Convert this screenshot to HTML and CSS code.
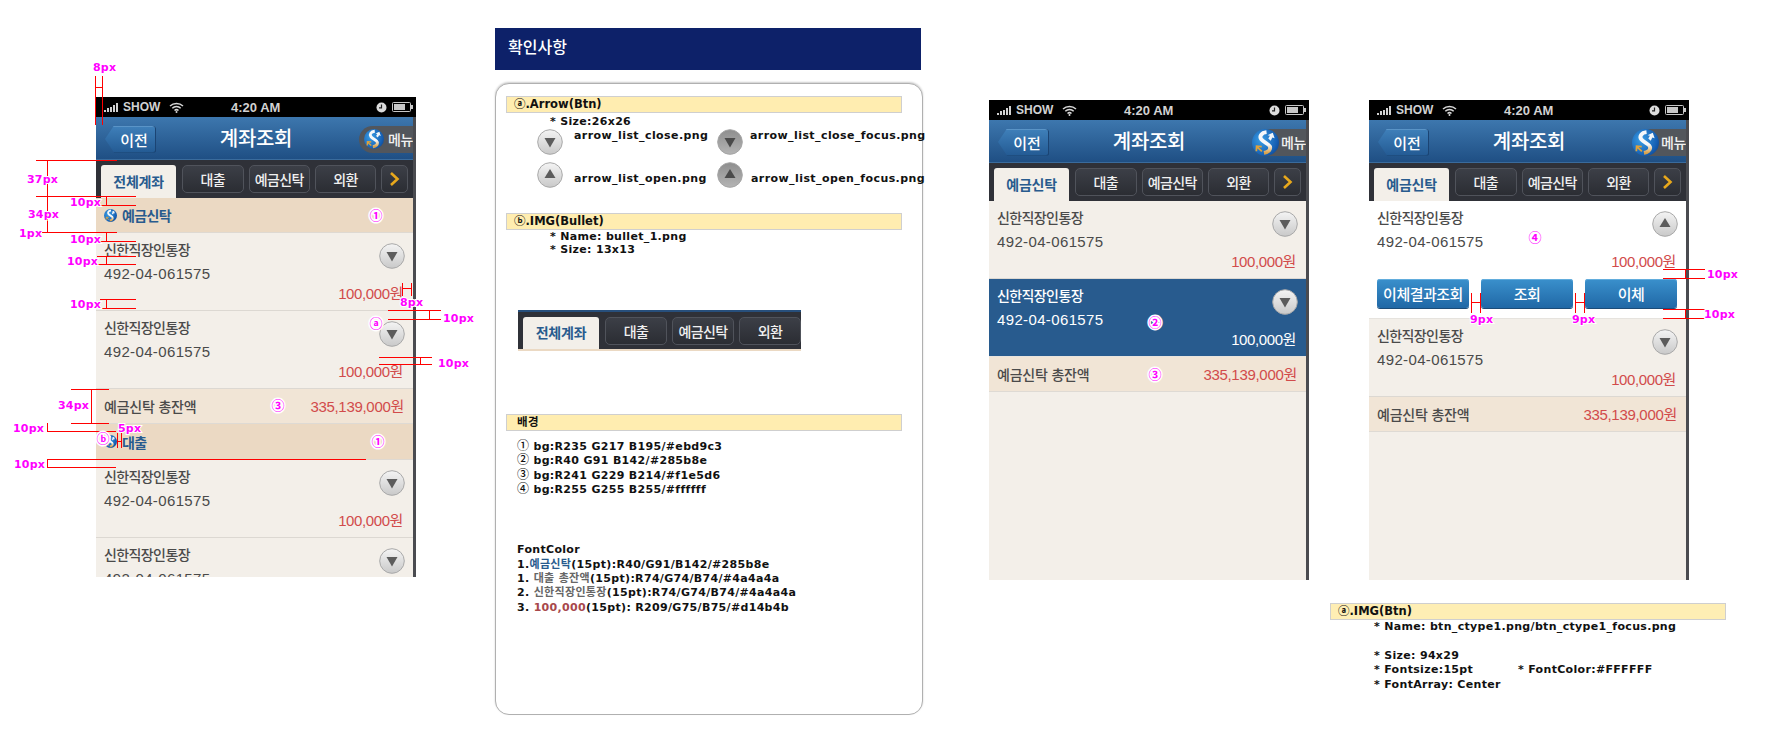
FILE: index.html
```html
<!DOCTYPE html>
<html lang="ko">
<head>
<meta charset="utf-8">
<title>계좌조회 화면 설계</title>
<link rel="stylesheet" href="styles.css">
</head>
<body>
<svg class="sprite" aria-hidden="true">
  <defs>
    <linearGradient id="g-light" x1="0" y1="0" x2="0" y2="1"><stop offset="0" stop-color="#f4f4f4"/><stop offset="1" stop-color="#c9c9c9"/></linearGradient>
    <linearGradient id="g-dark" x1="0" y1="0" x2="0" y2="1"><stop offset="0" stop-color="#8e8e8e"/><stop offset="1" stop-color="#b4b4b4"/></linearGradient>
    <radialGradient id="g-logo" cx=".35" cy=".4" r=".8"><stop offset="0" stop-color="#3a9fe6"/><stop offset=".7" stop-color="#1660b4"/><stop offset="1" stop-color="#0e3f86"/></radialGradient>
    <linearGradient id="g-s" x1="0" y1="0" x2="0" y2="1"><stop offset="0" stop-color="#f6f8fa"/><stop offset=".6" stop-color="#f6f8fa"/><stop offset="1" stop-color="#d9a24a"/></linearGradient>
    <symbol id="arrow-down" viewBox="0 0 26 26"><circle cx="13" cy="13" r="12.3" fill="url(#g-light)" stroke="#a9a9a9"/><path d="M7.5 9h11L13 18.5z" fill="#5c5c5c"/></symbol>
    <symbol id="arrow-up" viewBox="0 0 26 26"><circle cx="13" cy="13" r="12.3" fill="url(#g-light)" stroke="#a9a9a9"/><path d="M7.5 16h11L13 7z" fill="#5c5c5c"/></symbol>
    <symbol id="arrow-down-focus" viewBox="0 0 26 26"><circle cx="13" cy="13" r="12.3" fill="url(#g-dark)" stroke="#a5a5a5"/><path d="M7.5 9h11L13 18.5z" fill="#4a4a4a"/></symbol>
    <symbol id="arrow-up-focus" viewBox="0 0 26 26"><circle cx="13" cy="13" r="12.3" fill="url(#g-dark)" stroke="#a5a5a5"/><path d="M7.5 16h11L13 7z" fill="#4a4a4a"/></symbol>
    <symbol id="logo" viewBox="0 0 26 26"><circle cx="13" cy="13" r="13" fill="url(#g-logo)"/><path d="M14 3C9 3.500 6.800 7 9 10c2.500 3.300 8.500 4.500 8.500 8 0 2.500-2.500 4.500-6 5" fill="none" stroke="url(#g-s)" stroke-width="3.800"/><path d="M15 6l5-2.500 1.800 5.500-2.200-.8-1.600 3-2.300-2 1.500-2.600z" fill="#f2f6fa"/><path d="M4 16.500l5.500 5M4.200 21.500l.2-5 5 .4" fill="none" stroke="#e0a33a" stroke-width="1.700"/></symbol>
  </defs>
</svg>

<main class="sheet">
  <!-- 화면 1 -->
  <section class="phone phone-first">
    <div class="status">
      <span class="signal"><i></i><i></i><i></i><i></i><i></i></span><span class="carrier">SHOW</span>
      <svg class="wifi" viewBox="0 0 15 11"><path d="M1 4a9.500 9.500 0 0 1 13 0M3.300 6.300a6 6 0 0 1 8.400 0M5.500 8.500a3 3 0 0 1 4 0" fill="none" stroke="#d8d8d8" stroke-width="1.500"/><circle cx="7.500" cy="10" r="1" fill="#d8d8d8"/></svg>
      <span class="time">4:20 AM</span>
      <svg class="clock" viewBox="0 0 11 11"><circle cx="5.500" cy="5.500" r="5" fill="#dcdcdc"/><path d="M5.500 2.500v3.300H3" fill="none" stroke="#222" stroke-width="1.200"/></svg>
      <svg class="battery" viewBox="0 0 21 10"><rect x=".5" y=".5" width="18" height="9" rx="1" fill="none" stroke="#c8c8c8"/><rect x="2" y="2" width="11" height="6" fill="#c8c8c8"/><rect x="19" y="3" width="2" height="4" fill="#c8c8c8"/></svg>
    </div>
    <div class="screen">
      <header class="nav">
        <div class="back">이전</div>
        <h1 class="title">계좌조회</h1>
        <div class="menu"><svg class="menu-logo"><use href="#logo"/></svg><span>메뉴</span></div>
      </header>
      <nav class="tabs">
        <div class="tab tab-on">전체계좌</div><div class="tab">대출</div><div class="tab">예금신탁</div><div class="tab">외환</div><div class="tab tab-more"><svg viewBox="0 0 11 14"><path d="M2 1l6.500 6L2 13" fill="none" stroke="#e8a81c" stroke-width="2.600"/></svg></div>
      </nav>
      <div class="group"><svg class="bullet"><use href="#logo"/></svg>예금신탁</div>
      <article class="item">
        <div class="item-top"><div><div class="name">신한직장인통장</div><div class="acct">492-04-061575</div></div><svg class="arrow"><use href="#arrow-down"/></svg></div>
        <div class="amount">100,000원</div>
      </article>
      <article class="item">
        <div class="item-top"><div><div class="name">신한직장인통장</div><div class="acct">492-04-061575</div></div><svg class="arrow"><use href="#arrow-down"/></svg></div>
        <div class="amount">100,000원</div>
      </article>
      <div class="total"><span>예금신탁 총잔액</span><b>335,139,000원</b></div>
      <div class="group group-tall"><svg class="bullet"><use href="#logo"/></svg>대출</div>
      <article class="item">
        <div class="item-top"><div><div class="name">신한직장인통장</div><div class="acct">492-04-061575</div></div><svg class="arrow"><use href="#arrow-down"/></svg></div>
        <div class="amount">100,000원</div>
      </article>
      <article class="item">
        <div class="item-top"><div><div class="name">신한직장인통장</div><div class="acct">492-04-061575</div></div><svg class="arrow"><use href="#arrow-down"/></svg></div>
        <div class="amount">100,000원</div>
      </article>
    </div>
  </section>

  <!-- 확인사항 -->
  <section class="notes">
    <h2 class="notes-head">확인사항</h2>
    <div class="panel">
      <div class="bar">ⓐ.Arrow(Btn)</div>
      <p class="line indent line-first">* Size:26x26</p>
      <div class="arrow-grid">
        <svg class="arrow"><use href="#arrow-down"/></svg><span class="file file-high">arrow_list_close.png</span>
        <svg class="arrow"><use href="#arrow-down-focus"/></svg><span class="file file-high">arrow_list_close_focus.png</span>
        <svg class="arrow"><use href="#arrow-up"/></svg><span class="file">arrow_list_open.png</span>
        <svg class="arrow"><use href="#arrow-up-focus"/></svg><span class="file file-last">arrow_list_open_focus.png</span>
      </div>
      <div class="bar bar-b">ⓑ.IMG(Bullet)</div>
      <p class="line indent">* Name: bullet_1.png</p>
      <p class="line indent">* Size: 13x13</p>
      <div class="tabs tabs-sample">
        <div class="tab tab-on">전체계좌</div><div class="tab">대출</div><div class="tab">예금신탁</div><div class="tab">외환</div>
      </div>
      <div class="bar bar-c"><span class="bar-ko">배경</span></div>
      <div class="list">
        <p class="line"><span class="num">①</span> bg:R235 G217 B195/#ebd9c3</p>
        <p class="line"><span class="num">②</span> bg:R40 G91 B142/#285b8e</p>
        <p class="line"><span class="num">③</span> bg:R241 G229 B214/#f1e5d6</p>
        <p class="line"><span class="num">④</span> bg:R255 G255 B255/#ffffff</p>
      </div>
      <div class="list list-font">
        <p class="line">FontColor</p>
        <p class="line">1.<span class="c-blue">예금신탁</span>(15pt):R40/G91/B142/#285b8e</p>
        <p class="line">1. <span class="c-gray">대출 총잔액</span>(15pt):R74/G74/B74/#4a4a4a</p>
        <p class="line">2. <span class="c-gray">신한직장인통장</span>(15pt):R74/G74/B74/#4a4a4a</p>
        <p class="line">3. <span class="c-red">100,000</span>(15pt): R209/G75/B75/#d14b4b</p>
      </div>
    </div>
  </section>

  <!-- 화면 2 -->
  <section class="phone phone-second">
    <div class="status">
      <span class="signal"><i></i><i></i><i></i><i></i><i></i></span><span class="carrier">SHOW</span>
      <svg class="wifi" viewBox="0 0 15 11"><path d="M1 4a9.500 9.500 0 0 1 13 0M3.300 6.300a6 6 0 0 1 8.400 0M5.500 8.500a3 3 0 0 1 4 0" fill="none" stroke="#d8d8d8" stroke-width="1.500"/><circle cx="7.500" cy="10" r="1" fill="#d8d8d8"/></svg>
      <span class="time">4:20 AM</span>
      <svg class="clock" viewBox="0 0 11 11"><circle cx="5.500" cy="5.500" r="5" fill="#dcdcdc"/><path d="M5.500 2.500v3.300H3" fill="none" stroke="#222" stroke-width="1.200"/></svg>
      <svg class="battery" viewBox="0 0 21 10"><rect x=".5" y=".5" width="18" height="9" rx="1" fill="none" stroke="#c8c8c8"/><rect x="2" y="2" width="11" height="6" fill="#c8c8c8"/><rect x="19" y="3" width="2" height="4" fill="#c8c8c8"/></svg>
    </div>
    <div class="screen">
      <header class="nav">
        <div class="back">이전</div>
        <h1 class="title">계좌조회</h1>
        <div class="menu menu-big"><svg class="menu-logo"><use href="#logo"/></svg><span>메뉴</span></div>
      </header>
      <nav class="tabs">
        <div class="tab tab-on">예금신탁</div><div class="tab">대출</div><div class="tab">예금신탁</div><div class="tab">외환</div><div class="tab tab-more"><svg viewBox="0 0 11 14"><path d="M2 1l6.500 6L2 13" fill="none" stroke="#e8a81c" stroke-width="2.600"/></svg></div>
      </nav>
      <article class="item">
        <div class="item-top"><div><div class="name">신한직장인통장</div><div class="acct">492-04-061575</div></div><svg class="arrow"><use href="#arrow-down"/></svg></div>
        <div class="amount">100,000원</div>
      </article>
      <article class="item item-focus">
        <div class="item-top"><div><div class="name">신한직장인통장</div><div class="acct">492-04-061575</div></div><svg class="arrow"><use href="#arrow-down"/></svg></div>
        <div class="amount">100,000원</div>
      </article>
      <div class="total"><span>예금신탁 총잔액</span><b>335,139,000원</b></div>
    </div>
  </section>

  <!-- 화면 3 -->
  <section class="third">
    <div class="phone phone-third">
      <div class="status">
        <span class="signal"><i></i><i></i><i></i><i></i><i></i></span><span class="carrier">SHOW</span>
        <svg class="wifi" viewBox="0 0 15 11"><path d="M1 4a9.500 9.500 0 0 1 13 0M3.300 6.300a6 6 0 0 1 8.400 0M5.500 8.500a3 3 0 0 1 4 0" fill="none" stroke="#d8d8d8" stroke-width="1.500"/><circle cx="7.500" cy="10" r="1" fill="#d8d8d8"/></svg>
        <span class="time">4:20 AM</span>
        <svg class="clock" viewBox="0 0 11 11"><circle cx="5.500" cy="5.500" r="5" fill="#dcdcdc"/><path d="M5.500 2.500v3.300H3" fill="none" stroke="#222" stroke-width="1.200"/></svg>
        <svg class="battery" viewBox="0 0 21 10"><rect x=".5" y=".5" width="18" height="9" rx="1" fill="none" stroke="#c8c8c8"/><rect x="2" y="2" width="11" height="6" fill="#c8c8c8"/><rect x="19" y="3" width="2" height="4" fill="#c8c8c8"/></svg>
      </div>
      <div class="screen">
        <header class="nav">
          <div class="back">이전</div>
          <h1 class="title">계좌조회</h1>
          <div class="menu menu-big"><svg class="menu-logo"><use href="#logo"/></svg><span>메뉴</span></div>
        </header>
        <nav class="tabs">
          <div class="tab tab-on">예금신탁</div><div class="tab">대출</div><div class="tab">예금신탁</div><div class="tab">외환</div><div class="tab tab-more"><svg viewBox="0 0 11 14"><path d="M2 1l6.500 6L2 13" fill="none" stroke="#e8a81c" stroke-width="2.600"/></svg></div>
        </nav>
        <article class="item item-open">
          <div class="item-top"><div><div class="name">신한직장인통장</div><div class="acct">492-04-061575</div></div><svg class="arrow"><use href="#arrow-up"/></svg></div>
          <div class="amount">100,000원</div>
          <div class="actions"><div class="btn">이체결과조회</div><div class="btn">조회</div><div class="btn">이체</div></div>
        </article>
        <article class="item">
          <div class="item-top"><div><div class="name">신한직장인통장</div><div class="acct">492-04-061575</div></div><svg class="arrow"><use href="#arrow-down"/></svg></div>
          <div class="amount">100,000원</div>
        </article>
        <div class="total"><span>예금신탁 총잔액</span><b>335,139,000원</b></div>
      </div>
    </div>
    <div class="btn-notes">
      <div class="bar bar-wide">ⓐ.IMG(Btn)</div>
      <p class="line indent-b">* Name: btn_ctype1.png/btn_ctype1_focus.png</p>
      <p class="line indent-b gap-line">* Size: 94x29</p>
      <p class="line indent-b split"><span class="split-col">* Fontsize:15pt</span><span>* FontColor:#FFFFFF</span></p>
      <p class="line indent-b">* FontArray: Center</p>
    </div>
  </section>
</main>

<!-- 치수 주석 -->
<svg class="marks" viewBox="0 0 1780 740">
  <path class="rule" d="M95.500 76V125M102.500 76V125M96 87H102
    M36 160.500H117M47.500 160V232M36 196.500H136M42 232.500H117
    M100 205.500H136M106.500 196V205M100 241.500H136M106.500 233V241M97 256.500H136M97 264.500H136M106.500 256V264
    M100 299.500H136M100 308.500H136M106.500 299V308
    M402.500 283V296M411.500 283V296M402 288.500H411
    M388 310.500H441M388 319.500H441M429.500 310V319
    M379 357.500H432M379 364.500H432M420.500 357V364
    M71 389.500H109M71 423.500H109M91.500 389V423
    M47 431.500H116M47.500 423V431M117.500 433V448M121.500 433V448M117 441.500H121
    M47 459.500H366M47 467.500H116M47.500 459V467
    M1663 269.500H1705M1663 278.500H1705M1685.500 269V278
    M1663 309.500H1705M1663 318.500H1705M1685.500 309V318
    M1471.500 293V313M1480.500 293V313M1471 302.500H1480
    M1575.500 293V313M1584.500 293V313M1575 302.500H1584"/>
  <g class="dim">
    <text x="93" y="71">8px</text>
    <text x="27" y="183">37px</text>
    <text x="28" y="218">34px</text>
    <text x="19" y="237">1px</text>
    <text x="70" y="206">10px</text>
    <text x="70" y="243">10px</text>
    <text x="67" y="265">10px</text>
    <text x="70" y="308">10px</text>
    <text x="400" y="306">8px</text>
    <text x="443" y="322">10px</text>
    <text x="438" y="367">10px</text>
    <text x="58" y="409">34px</text>
    <text x="13" y="432">10px</text>
    <text x="118" y="432">5px</text>
    <text x="14" y="468">10px</text>
    <text x="1707" y="278">10px</text>
    <text x="1704" y="318">10px</text>
    <text x="1470" y="323">9px</text>
    <text x="1572" y="323">9px</text>
  </g>
  <g class="dot">
    <text x="376" y="220">①</text>
    <text x="376" y="328">ⓐ</text>
    <text x="278" y="410">③</text>
    <text x="103" y="443">ⓑ</text>
    <text x="378" y="446">①</text>
    <text x="1155" y="327">②</text>
    <text x="1155" y="379">③</text>
    <text x="1535" y="242">④</text>
  </g>
</svg>
</body>
</html>
```
FILE: styles.css
```css
* { box-sizing: border-box; }
html, body { margin: 0; padding: 0; background: #fff; }
body {
  position: relative;
  width: 1780px;
  height: 740px;
  overflow: hidden;
  font-family: "Liberation Sans", "Noto Sans CJK KR", sans-serif;
}
p, h1, h2 { margin: 0; }

.sprite { position: absolute; width: 0; height: 0; }

.sheet {
  display: flex;
  align-items: flex-start;
  padding: 28px 0 0 96px;
}

/* phones */
.phone {
  width: 320px;
  height: 480px;
  overflow: hidden;
  flex: none;
  background: #4a4b50;
}
.phone-first { margin-top: 69px; }
.phone-second { margin: 72px 0 0 66px; }
.phone-third { margin-left: 39px; }
.third { margin: 72px 0 0 21px; width: 400px; flex: none; }

.status {
  height: 20px;
  background: #000;
  display: flex;
  align-items: center;
  padding-left: 8px;
  color: #d2d2d2;
  font-size: 13px;
  font-weight: 700;
  position: relative;
}
.signal { display: flex; align-items: flex-end; gap: 1px; height: 9px; width: 15px; margin-top: 1px; }
.signal i { display: block; width: 2px; background: #d2d2d2; }
.signal i:nth-child(1) { height: 2px; }
.signal i:nth-child(2) { height: 4px; }
.signal i:nth-child(3) { height: 5px; }
.signal i:nth-child(4) { height: 7px; }
.signal i:nth-child(5) { height: 9px; }
.carrier { margin-left: 4px; width: 36px; font-size: 12px; }
.wifi { width: 15px; height: 11px; margin-left: 10px; }
.time { margin-left: 47px; width: 52px; white-space: nowrap; }
.clock { width: 11px; height: 11px; margin-left: 93px; }
.battery { width: 21px; height: 10px; margin-left: 5px; }

.screen { width: 317px; height: 460px; background: #f3efe9; overflow: hidden; }

.nav {
  height: 43px;
  display: grid;
  grid-template-columns: 1fr auto 1fr;
  align-items: center;
  padding-left: 3px;
  background: linear-gradient(#3d77ae, #1f4f84);
  border-bottom: 1px solid #3a6b9c;
}
.back {
  justify-self: start;
  width: 51px;
  height: 27px;
  margin-left: 6px;
  padding-left: 7px;
  display: flex;
  align-items: center;
  justify-content: center;
  color: #fff;
  font-size: 15px;
  font-weight: 500;
  background: linear-gradient(#3f80ba, #235a93);
  box-shadow: inset 0 -1px 0 #1b4473, inset -1px 0 0 #1b4473, inset 0 1px 0 #5a94c7;
  clip-path: polygon(0 50%, 9px 0, 100% 0, 100% 100%, 9px 100%);
  border-radius: 0 3px 3px 0;
}
.title {
  color: #fff;
  font-size: 20px;
  font-weight: 500;
  line-height: 43px;
  padding-top: 1px;
  letter-spacing: -.3px;
  white-space: nowrap;
}
.menu {
  justify-self: end;
  width: 54px;
  height: 27px;
  display: flex;
  align-items: center;
  background: #52565c;
  border-radius: 14px 0 0 14px;
  color: #f2f2f2;
  font-size: 14px;
  font-weight: 500;
  letter-spacing: -.4px;
  white-space: nowrap;
  overflow: hidden;
  padding-left: 5px;
}
.menu-logo { width: 20px; height: 20px; flex: none; margin-right: 4px; }
.menu-big { overflow: visible; padding-left: 0; background: linear-gradient(90deg, transparent 12px, #52565c 12px); }
.menu-big .menu-logo { width: 27px; height: 27px; margin-right: 2px; }

.tabs {
  height: 38px;
  padding: 5px 5px 0;
  display: flex;
  gap: 5px;
  background: #2f3138;
}
.tab {
  width: 62px;
  height: 28px;
  border: 1px solid #50535b;
  border-radius: 5px;
  background: linear-gradient(#3c3f47, #2b2d33);
  color: #f0f0f0;
  font-size: 14px;
  font-weight: 500;
  letter-spacing: -.6px;
  display: flex;
  align-items: center;
  justify-content: center;
  white-space: nowrap;
}
.tab-on {
  width: 76px;
  height: 33px;
  margin-right: 1px;
  border: 0;
  border-radius: 3px 3px 0 0;
  background: #f3efe9;
  color: #285b8e;
  font-weight: 700;
  letter-spacing: -.2px;
  padding-bottom: 2px;
}
.tab-more { width: 27px; }
.tab-more svg { width: 11px; height: 14px; }

.group {
  height: 35px;
  display: flex;
  align-items: center;
  padding-left: 8px;
  background: #ebd9c3;
  border-bottom: 1px solid #ded9d2;
  color: #285b8e;
  font-size: 14px;
  font-weight: 700;
  letter-spacing: -.6px;
}
.group-tall { height: 36px; }
.bullet { width: 13px; height: 13px; margin-right: 5px; flex: none; }

.item {
  height: 78px;
  padding: 5px 8px 0;
  border-bottom: 1px solid #dcd8d2;
  color: #4a4a4a;
}
.item-top { display: flex; justify-content: space-between; }
.name { font-size: 14px; line-height: 24px; letter-spacing: -.6px; font-weight: 500; }
.acct { font-size: 15px; line-height: 24px; letter-spacing: .36px; }
.arrow { width: 26px; height: 26px; flex: none; }
.item-top .arrow { margin-top: 5px; }
.amount {
  padding-right: 2px;
  text-align: right;
  font-size: 15px;
  line-height: 16px;
  letter-spacing: -.4px;
  color: #d14b4b;
}
.item-focus { background: #285b8e; color: #fff; border-bottom-color: #e8e4de; }
.item-focus .amount { color: #fff; }
.item-open { height: 118px; background: #fff; border-bottom-color: #e6e3de; }
.actions { display: flex; gap: 12px; margin-top: 9px; }
.btn {
  width: 92px;
  height: 29px;
  border-radius: 3px;
  background: linear-gradient(#3a90cc, #2068a6);
  box-shadow: inset 0 1px 0 #62addd, 0 1px 0 #1c4c78;
  color: #fff;
  font-size: 15px;
  font-weight: 500;
  letter-spacing: -.5px;
  display: flex;
  align-items: center;
  justify-content: center;
  white-space: nowrap;
}

.total {
  height: 35px;
  display: flex;
  align-items: center;
  justify-content: space-between;
  padding: 0 9px 1px 8px;
  background: #f1e5d6;
  border-bottom: 1px solid #dedad4;
  color: #4a4a4a;
  font-size: 14px;
  font-weight: 500;
  letter-spacing: -.2px;
}
.total b { color: #d14b4b; font-size: 15px; font-weight: 400; letter-spacing: -.3px; }

/* notes */
.notes { margin-left: 79px; width: 428px; flex: none; }
.notes-head {
  width: 426px;
  height: 42px;
  padding-left: 13px;
  background: #0d2169;
  color: #fff;
  font-size: 16px;
  font-weight: 500;
  line-height: 39px;
}
.panel {
  height: 632px;
  margin-top: 13px;
  padding: 12px 10px 0;
  border: 1px solid #b0b0b0;
  border-radius: 14px;
  box-shadow: 0 -1px 2px #ccc;
  background: #fff;
}
.bar {
  width: 396px;
  height: 17px;
  padding-left: 7px;
  background: #ffedb0;
  border: 1px solid #cfcfcf;
  font-family: "DejaVu Sans", "Noto Sans CJK KR", sans-serif;
  font-size: 11.5px;
  font-weight: 700;
  line-height: 15px;
  color: #111;
  white-space: nowrap;
}
.bar-b { margin-top: 25px; }
.bar-c { margin-top: 63px; }
.bar-ko { padding-left: 3px; letter-spacing: .5px; }
.line {
  font-family: "DejaVu Sans", "Noto Sans CJK KR", sans-serif;
  font-size: 11px;
  font-weight: 700;
  line-height: 13px;
  letter-spacing: .32px;
  color: #111;
  white-space: pre;
}
.line-first { margin-top: 2px; }
.num { font-family: "Noto Sans CJK KR", sans-serif; font-size: 12px; font-weight: 500; line-height: 0; }
.indent { padding-left: 44px; }
.arrow-grid {
  margin: 1px 0 0 31px;
  display: grid;
  grid-template-columns: 26px 154px 26px auto;
  grid-auto-rows: 26px;
  row-gap: 7px;
  align-items: center;
}
.file {
  font-family: "DejaVu Sans", sans-serif;
  font-size: 11px;
  font-weight: 700;
  color: #111;
  padding-left: 11px;
  white-space: nowrap;
  letter-spacing: .42px;
  margin-top: 6px;
}
.file-high { margin-top: -14px; }
.file-high:nth-of-type(2) { padding-left: 7px; }
.file-last { padding-left: 8px; }

.tabs-sample {
  width: 283px;
  height: 41px;
  margin: 54px 0 0 12px;
  padding: 5px 5px 0;
  border-top: 2px solid #274f7c;
  border-bottom: 2px solid #ebd9c3;
}
.tabs-sample .tab-on { height: 32px; }
.tabs-sample .tab { flex: none; }

.list { margin: 9px 0 0 11px; }
.list .line { line-height: 14.33px; }
.list-font { margin-top: 46px; }
.c-blue { color: #285b8e; }
.c-gray { color: #666; }
.c-red { color: #a8484b; }

.btn-notes { margin: 23px 0 0 0; }
.bar-wide { background: #feeeb4; }
.indent-b { padding-left: 44px; line-height: 14.5px; }
.gap-line { margin-top: 14px; }
.split { display: flex; }
.split-col { width: 144px; }

/* annotation overlay */
.marks {
  position: absolute;
  left: 0;
  top: 0;
  width: 1780px;
  height: 740px;
  pointer-events: none;
}
.rule { fill: none; stroke: #ff0000; stroke-width: 1; shape-rendering: crispEdges; }
.dim text {
  font-family: "DejaVu Sans", sans-serif;
  font-size: 11px;
  font-weight: 700;
  letter-spacing: .2px;
  fill: #ff00ff;
  stroke: #fff;
  stroke-width: 2px;
  paint-order: stroke;
}
.dot text {
  font-family: "Noto Sans CJK KR", sans-serif;
  font-size: 13px;
  font-weight: 700;
  text-anchor: middle;
  fill: #ff00ff;
  stroke: #fff;
  stroke-width: 3px;
  paint-order: stroke;
}
```
